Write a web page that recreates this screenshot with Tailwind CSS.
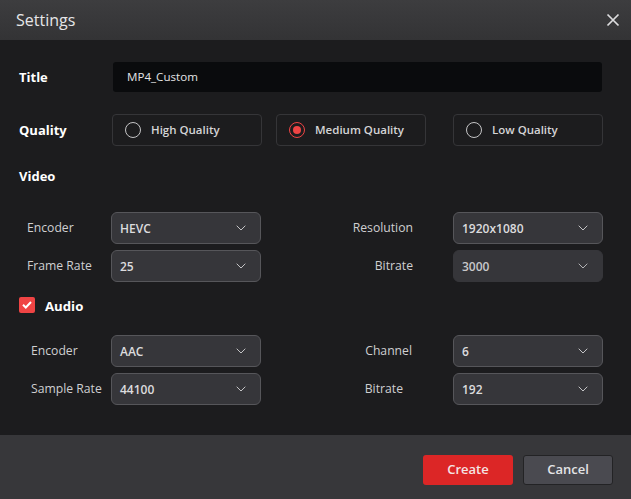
<!DOCTYPE html>
<html lang="en">
  <head>
    <meta charset="UTF-8" />
    <title>Settings</title>
    <script src="https://cdn.jsdelivr.net/npm/@tailwindcss/browser@4"></script>
  </head>
  <body class="bg-[#1c1c1e] font-['Open_Sans','Noto_Sans',sans-serif] text-[#e0e0e2]">
    <div class="w-[631px] h-[499px] flex flex-col overflow-hidden bg-[#1c1c1e]">
      <!-- header -->
      <header class="h-[40px] flex items-center justify-between pl-[16px] pr-[11px] bg-gradient-to-b from-[#3d3d3f] to-[#333335]">
        <span class="text-[16px] font-medium text-[#e6e6e8]">Settings</span>
        <svg class="w-[14px] h-[14px]" viewBox="0 0 14 14" fill="none" stroke="#dcdcde" stroke-width="1.7"><path d="M1.5 1.5 12.5 12.5M12.5 1.5 1.5 12.5" /></svg>
      </header>

      <!-- body -->
      <main class="flex-1">
        <div class="mt-[22px] flex items-center pl-[19px]">
          <span class="w-[94px] pt-[2px] text-[13px] font-bold text-white">Title</span>
          <div class="w-[489px] h-[30px] rounded-[3px] bg-[#0a0b0d] pl-[14px] flex items-center text-[11.6px] text-[#e4e4e6]">MP4_Custom</div>
        </div>

        <div class="mt-[22px] flex items-center pl-[19px]">
          <span class="w-[93px] pt-[2px] text-[13px] font-bold text-white">Quality</span>
          <div class="w-[150px] h-[32px] rounded-[4px] border border-[#353538] flex items-center pl-[12px] gap-[10px] text-[11.5px] font-semibold text-[#d4d4d6]">
            <span class="w-[16px] h-[16px] rounded-full border border-[#c4c4c6]"></span>High Quality
          </div>
          <div class="ml-[14px] w-[150px] h-[32px] rounded-[4px] border border-[#353538] flex items-center pl-[12px] gap-[10px] text-[11.5px] font-semibold text-[#d4d4d6]">
            <span class="w-[16px] h-[16px] rounded-full border border-[#ef4444] flex items-center justify-center"><span class="w-[8px] h-[8px] rounded-full bg-[#ef4444]"></span></span>Medium Quality
          </div>
          <div class="ml-[27px] w-[150px] h-[32px] rounded-[4px] border border-[#353538] flex items-center pl-[12px] gap-[10px] text-[11.5px] font-semibold text-[#d4d4d6]">
            <span class="w-[16px] h-[16px] rounded-full border border-[#c4c4c6]"></span>Low Quality
          </div>
        </div>

        <div class="mt-[20px] h-[20px] pl-[19px] pt-[2px] flex items-center text-[13px] font-bold text-white">Video</div>

        <div class="mt-[26px] grid grid-cols-[111px_150px_192px_150px] gap-y-[6px] items-center text-[12.2px] text-[#cfcfd1]">
          <span class="pl-[27px]">Encoder</span>
          <div class="h-[32px] rounded-[6px] border border-[#56565a] bg-[#36363a] flex items-center justify-between pl-[8px] pr-[14px] text-[12px] font-semibold text-[#dcdcde]"><span class="pt-[2px]">HEVC</span><svg class="w-[10px] h-[6px]" viewBox="0 0 10 6" fill="none" stroke="#c4c4c6"><path d="M.7.7 5 5 9.3.7" /></svg></div>
          <span class="text-right pr-[40px]">Resolution</span>
          <div class="h-[32px] rounded-[6px] border border-[#56565a] bg-[#36363a] flex items-center justify-between pl-[8px] pr-[14px] text-[12px] font-semibold text-[#dcdcde]"><span class="pt-[2px]">1920x1080</span><svg class="w-[10px] h-[6px]" viewBox="0 0 10 6" fill="none" stroke="#c4c4c6"><path d="M.7.7 5 5 9.3.7" /></svg></div>
          <span class="pl-[27px]">Frame Rate</span>
          <div class="h-[32px] rounded-[6px] border border-[#56565a] bg-[#36363a] flex items-center justify-between pl-[8px] pr-[14px] text-[12px] font-semibold text-[#dcdcde]"><span class="pt-[2px]">25</span><svg class="w-[10px] h-[6px]" viewBox="0 0 10 6" fill="none" stroke="#c4c4c6"><path d="M.7.7 5 5 9.3.7" /></svg></div>
          <span class="text-right pr-[40px]">Bitrate</span>
          <div class="h-[32px] rounded-[6px] border border-[#36363a] bg-[#36363a] flex items-center justify-between pl-[8px] pr-[14px] text-[12px] font-semibold text-[#c8c8ca]"><span class="pt-[2px]">3000</span><svg class="w-[10px] h-[6px]" viewBox="0 0 10 6" fill="none" stroke="#b4b4b6"><path d="M.7.7 5 5 9.3.7" /></svg></div>
        </div>

        <div class="mt-[15px] h-[16px] pl-[19px] flex items-center gap-[10px] text-[13.2px] font-bold text-white">
          <span class="w-[16px] h-[16px] rounded-[2px] bg-[#ef4444] flex items-center justify-center">
            <svg class="w-[10px] h-[8px]" viewBox="0 0 10 8" fill="none" stroke="#fff" stroke-width="2"><path d="M1 3.8 3.8 6.5 9 1" /></svg>
          </span>
          <span class="pt-[4px]">Audio</span>
        </div>

        <div class="mt-[22px] grid grid-cols-[111px_150px_192px_150px] gap-y-[6px] items-center text-[12.2px] text-[#cfcfd1]">
          <span class="pl-[31px]">Encoder</span>
          <div class="h-[32px] rounded-[6px] border border-[#56565a] bg-[#36363a] flex items-center justify-between pl-[8px] pr-[14px] text-[12px] font-semibold text-[#dcdcde]"><span class="pt-[2px]">AAC</span><svg class="w-[10px] h-[6px]" viewBox="0 0 10 6" fill="none" stroke="#c4c4c6"><path d="M.7.7 5 5 9.3.7" /></svg></div>
          <span class="text-right pr-[41px]">Channel</span>
          <div class="h-[32px] rounded-[6px] border border-[#56565a] bg-[#36363a] flex items-center justify-between pl-[8px] pr-[14px] text-[12px] font-semibold text-[#dcdcde]"><span class="pt-[2px]">6</span><svg class="w-[10px] h-[6px]" viewBox="0 0 10 6" fill="none" stroke="#c4c4c6"><path d="M.7.7 5 5 9.3.7" /></svg></div>
          <span class="pl-[31px] whitespace-nowrap">Sample Rate</span>
          <div class="h-[32px] rounded-[6px] border border-[#56565a] bg-[#36363a] flex items-center justify-between pl-[8px] pr-[14px] text-[12px] font-semibold text-[#dcdcde]"><span class="pt-[2px]">44100</span><svg class="w-[10px] h-[6px]" viewBox="0 0 10 6" fill="none" stroke="#c4c4c6"><path d="M.7.7 5 5 9.3.7" /></svg></div>
          <span class="text-right pr-[50px]">Bitrate</span>
          <div class="h-[32px] rounded-[6px] border border-[#56565a] bg-[#36363a] flex items-center justify-between pl-[8px] pr-[14px] text-[12px] font-semibold text-[#dcdcde]"><span class="pt-[2px]">192</span><svg class="w-[10px] h-[6px]" viewBox="0 0 10 6" fill="none" stroke="#c4c4c6"><path d="M.7.7 5 5 9.3.7" /></svg></div>
        </div>
      </main>

      <!-- footer -->
      <footer class="h-[64px] bg-[#37373a] flex items-center justify-end gap-[10px] pr-[18px] pt-[6px] text-[13px] font-semibold">
        <button class="w-[90px] h-[30px] rounded-[3px] bg-[#dc2626] text-[#f4e4e4]">Create</button>
        <button class="w-[90px] h-[30px] rounded-[3px] border border-[#232325] bg-[#4a4a50] text-[#e4e4e6]">Cancel</button>
      </footer>
    </div>
  </body>
</html>
